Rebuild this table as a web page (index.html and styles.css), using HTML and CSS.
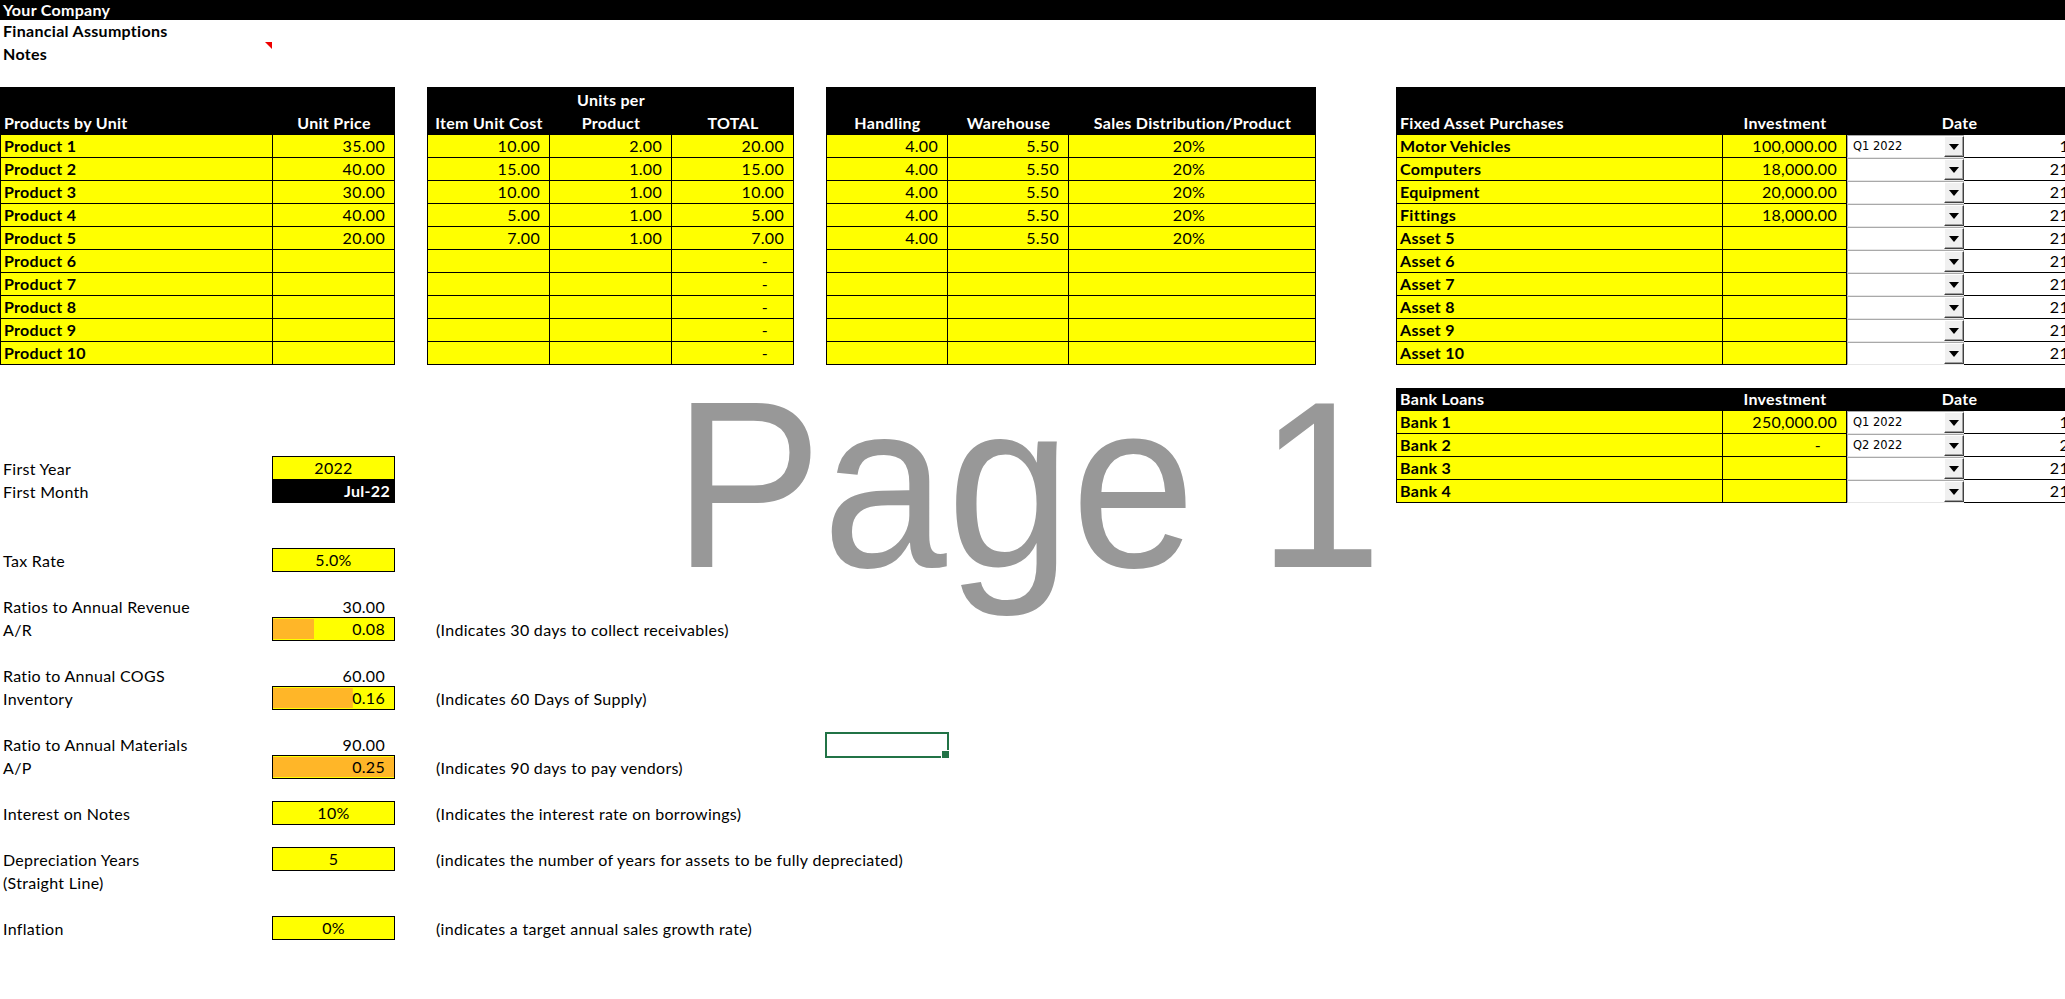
FILE: index.html
```html
<!DOCTYPE html>
<html>
<head>
<meta charset="utf-8">
<title>Financial Assumptions</title>
<link rel="stylesheet" href="styles.css">
</head>
<body>
<div class="sheet">
  <div class="titlebar">Your Company</div>
  <div class="line short">Financial Assumptions</div>
  <div class="line">Notes<span class="comment"></span></div>
  <div class="line short"></div>

  <section class="top">
    <div class="tbl t1">
      <div class="hd l">Products by Unit</div>
      <div class="hd">Unit Price</div>
      <div class="c b">Product 1</div><div class="c n">35.00</div>
      <div class="c b">Product 2</div><div class="c n">40.00</div>
      <div class="c b">Product 3</div><div class="c n">30.00</div>
      <div class="c b">Product 4</div><div class="c n">40.00</div>
      <div class="c b">Product 5</div><div class="c n">20.00</div>
      <div class="c b">Product 6</div><div class="c n"></div>
      <div class="c b">Product 7</div><div class="c n"></div>
      <div class="c b">Product 8</div><div class="c n"></div>
      <div class="c b">Product 9</div><div class="c n"></div>
      <div class="c b">Product 10</div><div class="c n"></div>
    </div>

    <div class="tbl t2">
      <div class="hd">Item Unit Cost</div>
      <div class="hd">Units per<br>Product</div>
      <div class="hd">TOTAL</div>
      <div class="c n">10.00</div><div class="c n">2.00</div><div class="c n">20.00</div>
      <div class="c n">15.00</div><div class="c n">1.00</div><div class="c n">15.00</div>
      <div class="c n">10.00</div><div class="c n">1.00</div><div class="c n">10.00</div>
      <div class="c n">5.00</div><div class="c n">1.00</div><div class="c n">5.00</div>
      <div class="c n">7.00</div><div class="c n">1.00</div><div class="c n">7.00</div>
      <div class="c n"></div><div class="c n"></div><div class="c d">-</div>
      <div class="c n"></div><div class="c n"></div><div class="c d">-</div>
      <div class="c n"></div><div class="c n"></div><div class="c d">-</div>
      <div class="c n"></div><div class="c n"></div><div class="c d">-</div>
      <div class="c n"></div><div class="c n"></div><div class="c d">-</div>
    </div>

    <div class="tbl t3">
      <div class="hd">Handling</div>
      <div class="hd">Warehouse</div>
      <div class="hd">Sales Distribution/Product</div>
      <div class="c n">4.00</div><div class="c n">5.50</div><div class="c m">20%</div>
      <div class="c n">4.00</div><div class="c n">5.50</div><div class="c m">20%</div>
      <div class="c n">4.00</div><div class="c n">5.50</div><div class="c m">20%</div>
      <div class="c n">4.00</div><div class="c n">5.50</div><div class="c m">20%</div>
      <div class="c n">4.00</div><div class="c n">5.50</div><div class="c m">20%</div>
      <div class="c n"></div><div class="c n"></div><div class="c m"></div>
      <div class="c n"></div><div class="c n"></div><div class="c m"></div>
      <div class="c n"></div><div class="c n"></div><div class="c m"></div>
      <div class="c n"></div><div class="c n"></div><div class="c m"></div>
      <div class="c n"></div><div class="c n"></div><div class="c m"></div>
    </div>

    <div class="tbl t4">
      <div class="hd l">Fixed Asset Purchases</div>
      <div class="hd">Investment</div>
      <div class="hd span2">Date</div>
      <div class="c b">Motor Vehicles</div><div class="c n">100,000.00</div><div class="combo"><span class="cv">Q1 2022</span><span class="cb"></span></div><div class="per">1</div>
      <div class="c b">Computers</div><div class="c n">18,000.00</div><div class="combo"><span class="cv"></span><span class="cb"></span></div><div class="per">21</div>
      <div class="c b">Equipment</div><div class="c n">20,000.00</div><div class="combo"><span class="cv"></span><span class="cb"></span></div><div class="per">21</div>
      <div class="c b">Fittings</div><div class="c n">18,000.00</div><div class="combo"><span class="cv"></span><span class="cb"></span></div><div class="per">21</div>
      <div class="c b">Asset 5</div><div class="c n"></div><div class="combo"><span class="cv"></span><span class="cb"></span></div><div class="per">21</div>
      <div class="c b">Asset 6</div><div class="c n"></div><div class="combo"><span class="cv"></span><span class="cb"></span></div><div class="per">21</div>
      <div class="c b">Asset 7</div><div class="c n"></div><div class="combo"><span class="cv"></span><span class="cb"></span></div><div class="per">21</div>
      <div class="c b">Asset 8</div><div class="c n"></div><div class="combo"><span class="cv"></span><span class="cb"></span></div><div class="per">21</div>
      <div class="c b">Asset 9</div><div class="c n"></div><div class="combo"><span class="cv"></span><span class="cb"></span></div><div class="per">21</div>
      <div class="c b">Asset 10</div><div class="c n"></div><div class="combo"><span class="cv"></span><span class="cb"></span></div><div class="per">21</div>
    </div>
  </section>

  <section class="lower">
    <div class="assump">
      <div class="blank"></div>
      <div class="blank"></div>
      <div class="blank"></div>
      <div class="blank"></div>
      <div class="lab">First Year</div><div class="val box">2022</div>
      <div class="lab">First Month</div><div class="val box dark">Jul-22</div>
      <div class="blank"></div>
      <div class="blank"></div>
      <div class="lab">Tax Rate</div><div class="val box">5.0%</div>
      <div class="blank"></div>
      <div class="lab">Ratios to Annual Revenue</div><div class="val plain">30.00</div>
      <div class="lab">A/R</div><div class="val box num bar" style="--w:34%">0.08</div><div class="note">(Indicates 30 days to collect receivables)</div>
      <div class="blank"></div>
      <div class="lab">Ratio to Annual COGS</div><div class="val plain">60.00</div>
      <div class="lab">Inventory</div><div class="val box num bar" style="--w:66%">0.16</div><div class="note">(Indicates 60 Days of Supply)</div>
      <div class="blank"></div>
      <div class="lab">Ratio to Annual Materials</div><div class="val plain">90.00</div>
      <div class="lab">A/P</div><div class="val box num bar" style="--w:100%">0.25</div><div class="note">(Indicates 90 days to pay vendors)</div>
      <div class="blank"></div>
      <div class="lab">Interest on Notes</div><div class="val box">10%</div><div class="note">(Indicates the interest rate on borrowings)</div>
      <div class="blank"></div>
      <div class="lab">Depreciation Years</div><div class="val box">5</div><div class="note">(indicates the number of years for assets to be fully depreciated)</div>
      <div class="lab">(Straight Line)</div>
      <div class="blank"></div>
      <div class="lab">Inflation</div><div class="val box">0%</div><div class="note">(indicates a target annual sales growth rate)</div>
    </div>

    <div class="tbl t5">
      <div class="hd1 l">Bank Loans</div>
      <div class="hd1">Investment</div>
      <div class="hd1 span2">Date</div>
      <div class="c b">Bank 1</div><div class="c n">250,000.00</div><div class="combo"><span class="cv">Q1 2022</span><span class="cb"></span></div><div class="per">1</div>
      <div class="c b">Bank 2</div><div class="c d">-</div><div class="combo"><span class="cv">Q2 2022</span><span class="cb"></span></div><div class="per">2</div>
      <div class="c b">Bank 3</div><div class="c n"></div><div class="combo"><span class="cv"></span><span class="cb"></span></div><div class="per">21</div>
      <div class="c b">Bank 4</div><div class="c n"></div><div class="combo"><span class="cv"></span><span class="cb"></span></div><div class="per">21</div>
    </div>
  </section>

  <div class="pagemark">Page 1</div>
  <div class="sel"></div>
</div>
</body>
</html>
```

FILE: styles.css
```css
* { box-sizing: border-box; margin: 0; padding: 0; }
html, body { width: 2065px; height: 999px; overflow: hidden; background: #fff; }
body { font-family: "Lato", "Liberation Sans", sans-serif; font-size: 16px; letter-spacing: 0.3px; color: #000; }

.sheet { position: relative; width: 2065px; height: 999px; overflow: hidden; }

.titlebar { height: 20px; background: #000; color: #fff; font-weight: 700; line-height: 19px; padding-left: 3px; white-space: nowrap; }
.line { position: relative; width: 272px; height: 23px; line-height: 23px; padding-left: 3px; font-weight: 700; white-space: nowrap; }
.line.short { height: 22px; line-height: 22px; }
.comment { position: absolute; top: 0; right: 0; width: 0; height: 0; border-top: 7px solid #e00; border-left: 7px solid transparent; }

/* top tables */
.top { display: flex; align-items: flex-start; height: 278px; }
.tbl { display: grid; flex: none; border-left: 1px solid #000; }
.t1 { grid-template-columns: 272px 122px; }
.t2 { grid-template-columns: 122px 122px 122px; margin-left: 32px; }
.t3 { grid-template-columns: 121px 121px 247px; margin-left: 32px; }
.t4 { grid-template-columns: 326px 124px 117px 108px; margin-left: 80px; }
.t5 { grid-template-columns: 326px 124px 117px 108px; margin-top: 23px; }

.hd, .hd1 { background: #000; color: #fff; font-weight: 700; border-bottom: 1px solid #000; display: flex; flex-direction: column; justify-content: flex-end; align-items: center; text-align: center; white-space: nowrap; }
.hd { height: 48px; line-height: 23px; }
.hd1 { height: 23px; line-height: 22px; }
.hd.l, .hd1.l { align-items: flex-start; padding-left: 3px; }
.span2 { grid-column: span 2; }

.c { height: 23px; line-height: 22px; background: #ff0; border-right: 1px solid #000; border-bottom: 1px solid #000; padding: 0 9px 0 3px; white-space: nowrap; overflow: hidden; }
.c.b { font-weight: 700; }
.c.n { text-align: right; }
.c.m { text-align: center; }
.c.d { text-align: right; padding-right: 25px; }

.combo { height: 23px; display: flex; background: #fff; border-top: 1px solid #a9a9a9; border-left: 1px solid #a9a9a9; border-bottom: 1px solid #e6e6e6; }
.cv { flex: 1; padding-left: 5px; font-family: "DejaVu Sans", sans-serif; font-size: 11.5px; letter-spacing: 0; line-height: 21px; white-space: nowrap; }
.cb { width: 20px; flex: none; background: #f0f0f0; border: 1px solid; border-color: #fff #404040 #404040 #fff; box-shadow: inset -1px -1px 0 #a0a0a0; display: flex; align-items: center; justify-content: center; }
.cb::after { content: ""; width: 0; height: 0; border-left: 5px solid transparent; border-right: 5px solid transparent; border-top: 6px solid #000; }
.per { height: 23px; line-height: 22px; background: #fff; border-bottom: 1px solid #000; text-align: right; padding-right: 3px; white-space: nowrap; }

/* lower area */
.lower { display: flex; align-items: flex-start; }
.assump { flex: none; width: 1396px; display: grid; grid-template-columns: 272px 123px 32px 700px; grid-auto-rows: 23px; }
.blank { grid-column: 1 / -1; }
.lab { grid-column: 1; line-height: 23px; padding-left: 3px; white-space: nowrap; }
.val { grid-column: 2; white-space: nowrap; }
.plain { text-align: right; padding-right: 10px; line-height: 23px; }
.box { margin-top: -1px; height: 24px; border: 1px solid #000; background: #ff0; line-height: 22px; text-align: center; }
.box.num { text-align: right; padding-right: 9px; }
.box.dark { background: #000; color: #fff; font-weight: 700; text-align: right; padding-right: 4px; }
.bar { background: linear-gradient(#ffb628, #ffb628) 0 1px / var(--w) calc(100% - 2px) no-repeat, #ff0; }
.note { grid-column: 4; padding-left: 9px; line-height: 23px; white-space: nowrap; }

/* overlays */
.pagemark { position: absolute; left: 673px; top: 366px; font-family: "Liberation Sans", Arial, sans-serif; font-size: 238px; letter-spacing: 0; line-height: 1; color: #989898; white-space: nowrap; pointer-events: none; transform: scaleX(0.94); transform-origin: 0 0; }
.sel { position: absolute; left: 825px; top: 732px; width: 124px; height: 26px; border: 2px solid #217346; }
.sel::after { content: ""; position: absolute; right: -3px; bottom: -3px; width: 7px; height: 7px; background: #217346; border: 1px solid #fff; }
```
